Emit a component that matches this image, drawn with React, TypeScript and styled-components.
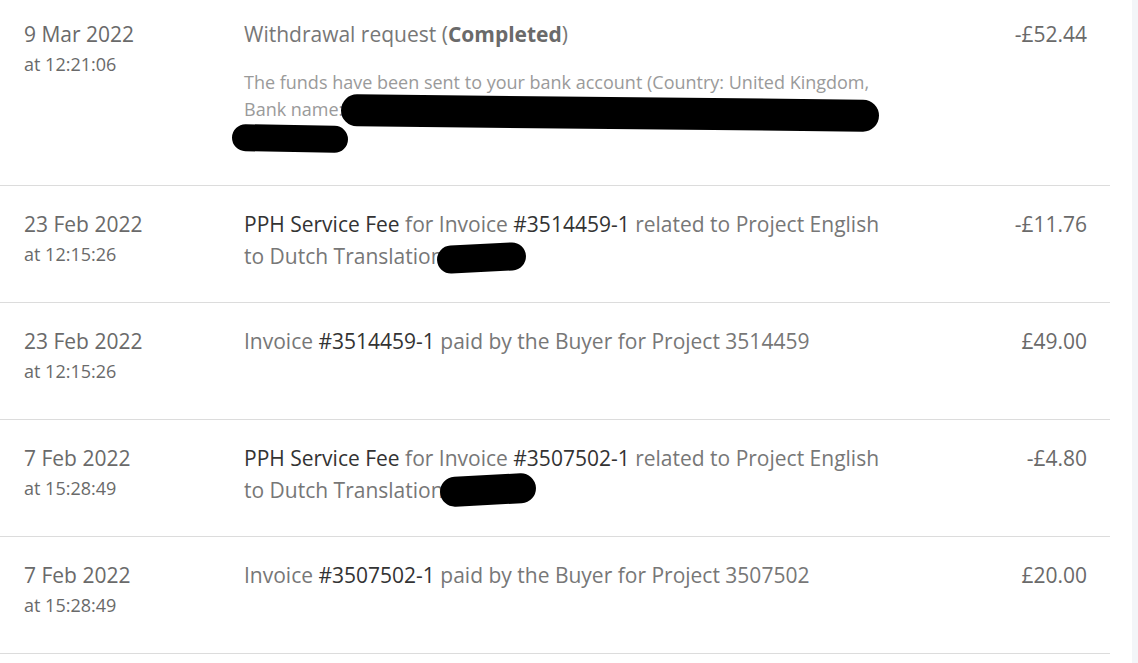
import React from "react";
import styled, { createGlobalStyle } from "styled-components";

const Global = createGlobalStyle`
  html, body {
    margin: 0;
    padding: 0;
    background: #fff;
    font-family: "Open Sans", "Liberation Sans", sans-serif;
    overflow: hidden;
  }
`;

const Page = styled.div`
  display: flex;
  width: 1138px;
  height: 663px;
  overflow: hidden;
`;

const List = styled.div`
  width: 1110px;
  margin-top: -4px;
`;

const Gutter = styled.div`
  flex: 1;
  display: flex;
  justify-content: flex-end;
`;

const Strip = styled.div`
  width: 6px;
  background: #f3f5f8;
`;

const Row = styled.div`
  display: grid;
  grid-template-columns: 220px 640px 1fr;
  min-height: 94px;
  padding: 22px 23px 0 24px;
  border-bottom: 1px solid #dcdcdc;
`;

const DateCol = styled.div`
  display: flex;
  flex-direction: column;
`;

const DateMain = styled.div`
  font-size: 21px;
  line-height: 32px;
  color: #6a6a6a;
`;

const DateTime = styled.div`
  font-size: 18px;
  line-height: 28px;
  color: #6a6a6a;
`;

const Desc = styled.div`
  position: relative;
  padding-bottom: 30px;
`;

const Title = styled.div`
  font-size: 21px;
  line-height: 32px;
  color: #777;
`;

const Strong = styled.span<{ $bold?: boolean }>`
  color: ${(p) => (p.$bold ? "#6a6a6a" : "#333")};
  font-weight: ${(p) => (p.$bold ? 700 : 400)};
`;

const Note = styled.div`
  margin-top: 19px;
  font-size: 18px;
  line-height: 27px;
  color: #9a9a9a;
  height: 86px;
`;

const Amount = styled.div`
  font-size: 21px;
  line-height: 32px;
  color: #6a6a6a;
  text-align: right;
`;

// marker scribbles that hide personal details
const Blob = styled.span<{ $rot?: number }>`
  position: absolute;
  background: #000;
  border-radius: 16px;
  transform: rotate(${(p) => p.$rot ?? 0}deg);
`;

type Entry = {
  date: string;
  time: string;
  amount: string;
  title: React.ReactNode;
  extra?: React.ReactNode;
};

const entries: Entry[] = [
  {
    date: "9 Mar 2022",
    time: "at 12:21:06",
    amount: "-£52.44",
    title: (
      <>
        Withdrawal request (<Strong $bold>Completed</Strong>)
      </>
    ),
    extra: (
      <>
        <Note>
          The funds have been sent to your bank account (Country: United Kingdom,
          <br />
          Bank name:
        </Note>
        <Blob style={{ left: 97, top: 79, width: 538, height: 32 }} $rot={0.6} />
        <Blob style={{ left: -12, top: 107, width: 116, height: 27 }} $rot={1} />
      </>
    ),
  },
  {
    date: "23 Feb 2022",
    time: "at 12:15:26",
    amount: "-£11.76",
    title: (
      <>
        <Strong>PPH Service Fee</Strong> for Invoice <Strong>#3514459-1</Strong> related to
        Project English to Dutch Translation
      </>
    ),
    extra: <Blob style={{ left: 193, top: 36, width: 89, height: 28 }} $rot={-3} />,
  },
  {
    date: "23 Feb 2022",
    time: "at 12:15:26",
    amount: "£49.00",
    title: (
      <>
        Invoice <Strong>#3514459-1</Strong> paid by the Buyer for Project 3514459
      </>
    ),
  },
  {
    date: "7 Feb 2022",
    time: "at 15:28:49",
    amount: "-£4.80",
    title: (
      <>
        <Strong>PPH Service Fee</Strong> for Invoice <Strong>#3507502-1</Strong> related to
        Project English to Dutch Translation
      </>
    ),
    extra: <Blob style={{ left: 196, top: 33, width: 96, height: 30 }} $rot={-3} />,
  },
  {
    date: "7 Feb 2022",
    time: "at 15:28:49",
    amount: "£20.00",
    title: (
      <>
        Invoice <Strong>#3507502-1</Strong> paid by the Buyer for Project 3507502
      </>
    ),
  },
];

export default function App() {
  return (
    <Page>
      <Global />
      <List>
        {entries.map((e, i) => (
          <Row key={i}>
            <DateCol>
              <DateMain>{e.date}</DateMain>
              <DateTime>{e.time}</DateTime>
            </DateCol>
            <Desc>
              <Title>{e.title}</Title>
              {e.extra}
            </Desc>
            <Amount>{e.amount}</Amount>
          </Row>
        ))}
      </List>
      <Gutter>
        <Strip />
      </Gutter>
    </Page>
  );
}
